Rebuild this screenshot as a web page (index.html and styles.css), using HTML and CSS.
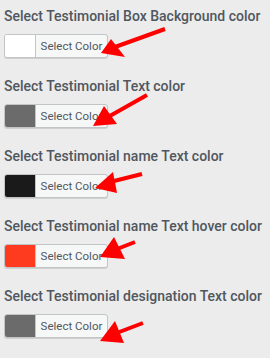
FILE: index.html
```html
<!DOCTYPE html>
<html lang="en">

<head>
  <meta charset="UTF-8">
  <title>Testimonial Colors</title>
  <link rel="stylesheet" href="styles.css">
</head>

<body>
  <div class="settings">
    <div class="setting-row">
      <h4 class="setting-title">Select Testimonial Box Background color</h4>
      <button class="color-btn"><span class="swatch" style="background:#ffffff"></span><span class="btn-label">Select Color</span></button>
    </div>
    <div class="setting-row">
      <h4 class="setting-title">Select Testimonial Text color</h4>
      <button class="color-btn"><span class="swatch" style="background:#6b6b6b"></span><span class="btn-label">Select Color</span></button>
    </div>
    <div class="setting-row">
      <h4 class="setting-title">Select Testimonial name Text color</h4>
      <button class="color-btn"><span class="swatch" style="background:#1a1a1a"></span><span class="btn-label">Select Color</span></button>
    </div>
    <div class="setting-row">
      <h4 class="setting-title">Select Testimonial name Text hover color</h4>
      <button class="color-btn"><span class="swatch" style="background:#ff3b1f"></span><span class="btn-label">Select Color</span></button>
    </div>
    <div class="setting-row">
      <h4 class="setting-title">Select Testimonial designation Text color</h4>
      <button class="color-btn"><span class="swatch" style="background:#6b6b6b"></span><span class="btn-label">Select Color</span></button>
    </div>
  </div>

  <!-- annotation arrows drawn over the screenshot -->
  <svg class="arrows" width="270" height="358" viewBox="0 0 270 358">
    <g fill="#ff0000" stroke="#ff0000">
      <line x1="165" y1="29" x2="115" y2="47" stroke-width="4" />
      <polygon points="101,53 111,39 125,57" stroke="none" />

      <line x1="147" y1="95" x2="108" y2="117" stroke-width="4" />
      <polygon points="93,126 104,106 117,124" stroke="none" />

      <line x1="142" y1="174" x2="110" y2="182" stroke-width="4" />
      <polygon points="95,188 113,172 117,193" stroke="none" />

      <line x1="135" y1="242" x2="112" y2="251" stroke-width="4" />
      <polygon points="100,257 114,237 125,259" stroke="none" />

      <line x1="143" y1="323" x2="114" y2="334" stroke-width="4" />
      <polygon points="100,341 115,321 124,343" stroke="none" />
    </g>
  </svg>
</body>

</html>
```
FILE: styles.css
```css
/* General Styles */
body {
  margin: 0;
  background-color: #ececec;
  font-family: Roboto, "Liberation Sans", Arial, sans-serif;
  color: #50575e;
}

.settings {
  padding: 7px 4px 0;
}

.setting-row {
  height: 70px;
}

.setting-title {
  margin: 0 0 9px;
  font-size: 14px;
  line-height: 18px;
  font-weight: 500;
  white-space: nowrap;
}

/* Color picker button */
.color-btn {
  display: flex;
  align-items: stretch;
  width: 104px;
  height: 24px;
  padding: 0;
  border: 1px solid #c3c4c7;
  border-radius: 3px;
  background: #f6f7f7;
  overflow: hidden;
  box-shadow: 0 1px 0 #d0d0d0;
  cursor: pointer;
}

.swatch {
  width: 30px;
  border-right: 1px solid #c3c4c7;
}

.btn-label {
  flex: 1;
  display: flex;
  align-items: center;
  justify-content: center;
  font-family: Roboto, "Liberation Sans", Arial, sans-serif;
  font-size: 11.5px;
  color: #50575e;
}

.arrows {
  position: absolute;
  top: 0;
  left: 0;
  pointer-events: none;
}
```
